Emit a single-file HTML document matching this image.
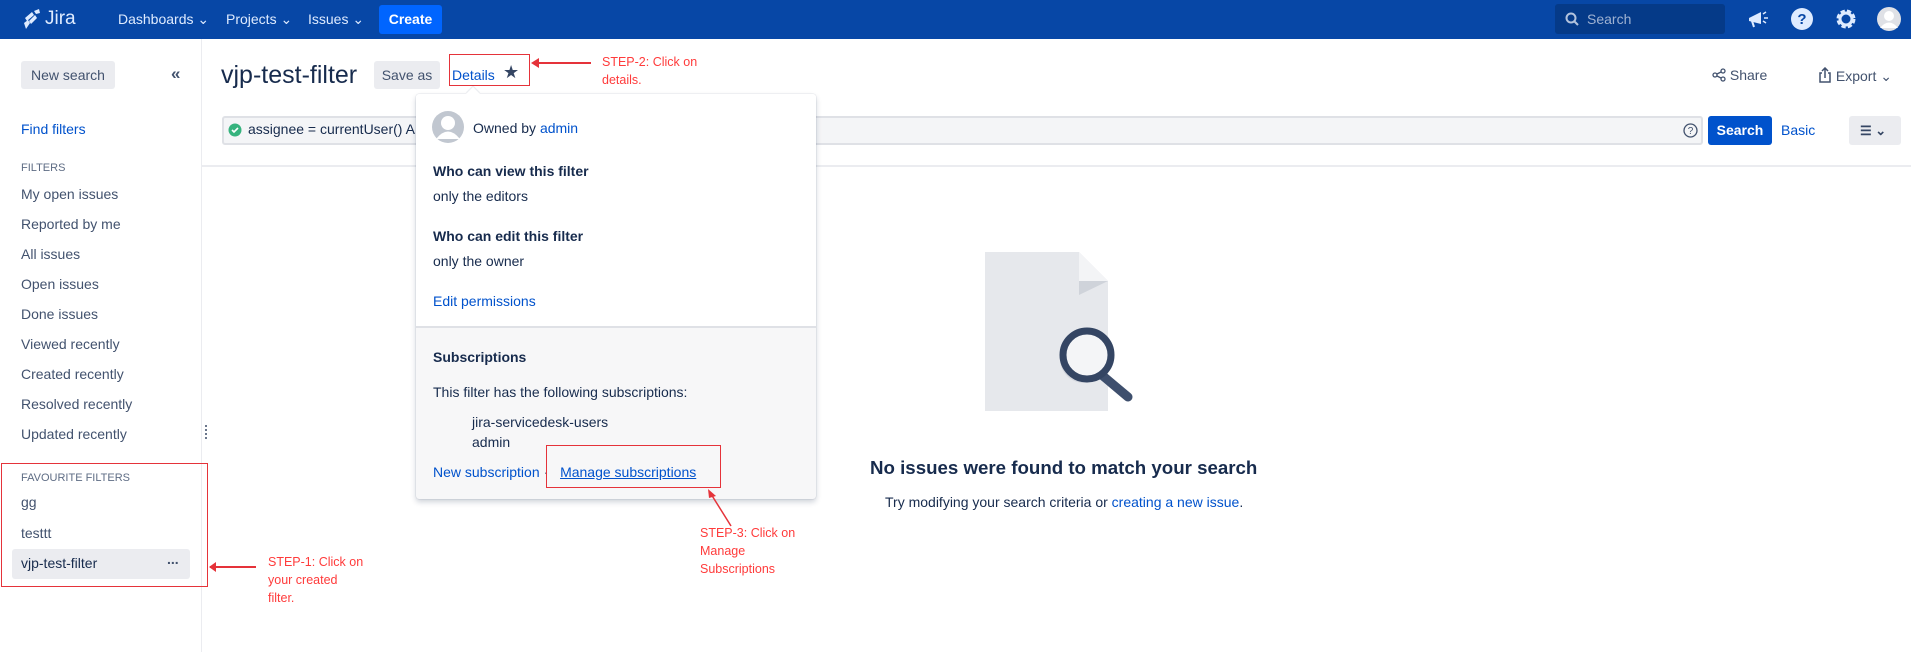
<!DOCTYPE html>
<html><head><meta charset="utf-8"><style>
*{margin:0;padding:0;box-sizing:border-box}
body{width:1911px;height:652px;overflow:hidden;background:#fff;font-family:"Liberation Sans",sans-serif;font-size:14px;color:#172b4d;position:relative}
.a{position:absolute;white-space:nowrap}
.hdr{position:absolute;left:0;top:0;width:1911px;height:39px;background:#0747a6}
.nav{color:#deebff;font-size:14px;top:11px}
.lnk{color:#0052cc}
.red{color:#ff3b3b;font-size:12.5px;line-height:18px}
.rb{position:absolute;border:1.5px solid #e5333a}
.side{top:0;font-size:14px;color:#42526e}
.bold{font-weight:bold;color:#172b4d}
</style></head><body>
<div class="hdr"></div>
<svg class="a" style="left:22px;top:9px" width="20" height="22" viewBox="0 0 20 22"><path d="M3 9 L10 3 L12 6 L5 12Z M7 12 L13 6 L15 9 L9 15Z M2 14 L6 11 L8 14 L4 20Z M12 2 L17 0 L18 4 L14 5Z" fill="#deebff"/></svg>
<div class="a" style="left:45px;top:8px;color:#deebff;font-size:19px">Jira</div>
<div class="a nav" style="left:118px">Dashboards ⌄</div>
<div class="a nav" style="left:226px">Projects ⌄</div>
<div class="a nav" style="left:308px">Issues ⌄</div>
<div class="a" style="left:379px;top:5px;width:63px;height:29px;background:#0065ff;border-radius:3px;color:#fff;font-weight:bold;text-align:center;line-height:29px">Create</div>
<div class="a" style="left:1555px;top:4px;width:170px;height:30px;background:#053a88;border-radius:3px"></div>
<svg class="a" style="left:1565px;top:12px" width="14" height="14"><circle cx="6" cy="6" r="4.5" stroke="#b3c3dd" stroke-width="2" fill="none"/><path d="M9 9l4 4" stroke="#b3c3dd" stroke-width="2"/></svg>
<div class="a" style="left:1587px;top:11px;color:#9fb2d2">Search</div>
<svg class="a" style="left:1747px;top:8px" width="22" height="22"><path d="M2 10 L14 4 L14 16 L2 13Z" fill="#deebff"/><path d="M5 13 L7 19" stroke="#deebff" stroke-width="2"/><path d="M16 6l3-2M17 10h4M16 13l3 2" stroke="#deebff" stroke-width="1.5"/></svg>
<svg class="a" style="left:1790px;top:7px" width="24" height="24"><circle cx="12" cy="12" r="11" fill="#deebff"/><text x="12" y="17" font-size="15" font-weight="bold" text-anchor="middle" fill="#0747a6" font-family="Liberation Sans">?</text></svg>
<svg class="a" style="left:1834px;top:7px" width="24" height="24" viewBox="0 0 24 24"><circle cx="12" cy="12" r="7.5" stroke="#deebff" stroke-width="4" fill="none" stroke-dasharray="4 2"/><circle cx="12" cy="12" r="6" stroke="#deebff" stroke-width="3" fill="none"/></svg>
<svg class="a" style="left:1876px;top:6px" width="26" height="26"><circle cx="13" cy="13" r="12" fill="#dfe1e6"/><circle cx="13" cy="10" r="5" fill="#fff"/><path d="M4 22 Q13 11 22 22" fill="#fff"/></svg>

<!-- sidebar -->
<div class="a" style="left:201px;top:39px;width:1px;height:613px;background:#ebecf0"></div>
<div class="a" style="left:21px;top:61px;width:94px;height:28px;background:#ebecf0;border-radius:3px;color:#42526e;text-align:center;line-height:28px">New search</div>
<div class="a" style="left:171px;top:64px;color:#42526e;font-size:17px;font-weight:bold">«</div>
<div class="a lnk" style="left:21px;top:121px">Find filters</div>
<div class="a" style="left:21px;top:162px;font-size:11px;color:#5e6c84">FILTERS</div>
<div class="a side" style="left:21px;top:186px">My open issues</div>
<div class="a side" style="left:21px;top:216px">Reported by me</div>
<div class="a side" style="left:21px;top:246px">All issues</div>
<div class="a side" style="left:21px;top:276px">Open issues</div>
<div class="a side" style="left:21px;top:306px">Done issues</div>
<div class="a side" style="left:21px;top:336px">Viewed recently</div>
<div class="a side" style="left:21px;top:366px">Created recently</div>
<div class="a side" style="left:21px;top:396px">Resolved recently</div>
<div class="a side" style="left:21px;top:426px">Updated recently</div>
<div class="a" style="left:205px;top:425px;width:2px;height:14px;background:repeating-linear-gradient(#6b778c 0 2px,transparent 2px 4px)"></div>
<div class="a" style="left:21px;top:472px;font-size:11px;color:#5e6c84">FAVOURITE FILTERS</div>
<div class="a side" style="left:21px;top:494px">gg</div>
<div class="a side" style="left:21px;top:525px">testtt</div>
<div class="a" style="left:12px;top:549px;width:178px;height:30px;background:#ebecf0;border-radius:3px"></div>
<div class="a side" style="left:21px;top:555px;color:#172b4d">vjp-test-filter</div>
<div class="a" style="left:167px;top:551px;font-weight:bold;color:#42526e">...</div>
<div class="rb" style="left:1px;top:463px;width:207px;height:124px"></div>
<div class="a" style="left:210px;top:566px;width:46px;height:1.5px;background:#e5333a"></div>
<div class="a" style="left:209px;top:562px;width:0;height:0;border-top:5px solid transparent;border-bottom:5px solid transparent;border-right:7px solid #e5333a"></div>
<div class="a red" style="left:268px;top:553px">STEP-1: Click on<br>your created<br>filter.</div>

<!-- main -->
<div class="a" style="left:221px;top:61px;font-size:25px;color:#172b4d">vjp-test-filter</div>
<div class="a" style="left:374px;top:61px;width:66px;height:28px;background:#ebecf0;border-radius:3px;color:#42526e;text-align:center;line-height:28px">Save as</div>
<div class="a lnk" style="left:452px;top:67px">Details</div>
<div class="a" style="left:503px;top:62px;font-size:18px;color:#344563">★</div>
<div class="rb" style="left:449px;top:54px;width:81px;height:32px"></div>
<div class="a" style="left:538px;top:62px;width:53px;height:1.5px;background:#e5333a"></div>
<div class="a" style="left:531px;top:58px;width:0;height:0;border-top:5px solid transparent;border-bottom:5px solid transparent;border-right:8px solid #e5333a"></div>
<div class="a red" style="left:602px;top:53px">STEP-2: Click on<br>details.</div>
<div class="a" style="left:1712px;top:67px;color:#42526e">
<svg width="14" height="14" style="vertical-align:-2px"><circle cx="3" cy="7" r="2" stroke="#42526e" fill="none" stroke-width="1.3"/><circle cx="11" cy="3" r="2" stroke="#42526e" fill="none" stroke-width="1.3"/><circle cx="11" cy="11" r="2" stroke="#42526e" fill="none" stroke-width="1.3"/><path d="M5 6l4-2M5 8l4 2" stroke="#42526e" stroke-width="1.3"/></svg> Share</div>
<div class="a" style="left:1818px;top:67px;color:#42526e">
<svg width="14" height="16" style="vertical-align:-2px"><path d="M4 6H2v9h10V6h-2" stroke="#42526e" fill="none" stroke-width="1.5"/><path d="M7 11V1M4 4l3-3 3 3" stroke="#42526e" fill="none" stroke-width="1.5"/></svg> Export ⌄</div>
<div class="a" style="left:222px;top:116px;width:1481px;height:29px;background:#f4f5f7;border:2px solid #dfe1e6;border-radius:3px"></div>
<svg class="a" style="left:228px;top:123px" width="14" height="14"><circle cx="7" cy="7" r="6.5" fill="#36b37e"/><path d="M4 7l2 2 4-4" stroke="#fff" stroke-width="1.6" fill="none"/></svg>
<div class="a" style="left:248px;top:121px;color:#172b4d">assignee = currentUser() AND</div>
<svg class="a" style="left:1683px;top:123px" width="15" height="15"><circle cx="7.5" cy="7.5" r="6.5" stroke="#42526e" fill="none" stroke-width="1.3"/><text x="7.5" y="11" font-size="10" text-anchor="middle" fill="#42526e" font-family="Liberation Sans">?</text></svg>
<div class="a" style="left:1708px;top:116px;width:64px;height:29px;background:#0052cc;border-radius:3px;color:#fff;font-weight:bold;text-align:center;line-height:29px">Search</div>
<div class="a lnk" style="left:1781px;top:122px">Basic</div>
<div class="a" style="left:1849px;top:116px;width:52px;height:29px;background:#ebecf0;border-radius:3px;color:#344563;font-weight:bold;line-height:29px;padding-left:11px;font-size:13px">☰ ⌄</div>
<div class="a" style="left:202px;top:165px;width:1709px;height:2px;background:#ebecf0"></div>

<!-- empty state -->
<svg class="a" style="left:985px;top:252px" width="160" height="160" viewBox="0 0 160 160">
<path d="M0 0H94L123 29V159H0Z" fill="#e6e8ec"/>
<path d="M94 0L123 29H94Z" fill="#f3f4f6"/><path d="M94 29H123L94 43Z" fill="#cfd3da"/>
<circle cx="99" cy="107" r="24" fill="#d3d6dd"/>
<path d="M118 124L143 145" stroke="#3e4f6d" stroke-width="9" stroke-linecap="round"/>
<circle cx="102" cy="103" r="24" fill="#f4f5f7" stroke="#344563" stroke-width="7"/>
</svg>
<div class="a" style="left:870px;top:457px;font-size:18.7px;font-weight:bold;color:#172b4d">No issues were found to match your search</div>
<div class="a" style="left:885px;top:494px;color:#172b4d">Try modifying your search criteria or <span class="lnk">creating a new issue</span>.</div>

<!-- popup -->
<div class="a" style="left:416px;top:94px;width:400px;height:405px;background:#f7f7f8;border-radius:3px;box-shadow:0 3px 6px rgba(9,30,66,.2),0 0 1px rgba(9,30,66,.3)"></div>
<div class="a" style="left:416px;top:94px;width:400px;height:234px;background:#fff;border-bottom:2px solid #dfe1e6;border-radius:3px 3px 0 0"></div>
<div class="a" style="left:468px;top:89px;width:10px;height:10px;background:#fff;transform:rotate(45deg);box-shadow:-1px -1px 1px rgba(9,30,66,.1)"></div>
<svg class="a" style="left:432px;top:111px" width="32" height="32"><circle cx="16" cy="16" r="16" fill="#c1c7d0"/><circle cx="16" cy="12" r="7" fill="#fff"/><path d="M4 28 Q16 13 28 28Z" fill="#fff"/></svg>
<div class="a" style="left:473px;top:120px">Owned by <span class="lnk">admin</span></div>
<div class="a bold" style="left:433px;top:163px">Who can view this filter</div>
<div class="a" style="left:433px;top:188px">only the editors</div>
<div class="a bold" style="left:433px;top:228px">Who can edit this filter</div>
<div class="a" style="left:433px;top:253px">only the owner</div>
<div class="a lnk" style="left:433px;top:293px">Edit permissions</div>
<div class="a bold" style="left:433px;top:349px">Subscriptions</div>
<div class="a" style="left:433px;top:384px">This filter has the following subscriptions:</div>
<div class="a" style="left:472px;top:414px">jira-servicedesk-users</div>
<div class="a" style="left:472px;top:434px">admin</div>
<div class="a lnk" style="left:433px;top:464px">New subscription <span style="color:#6b778c">·</span> <span style="text-decoration:underline;margin-left:8px">Manage subscriptions</span></div>
<div class="rb" style="left:546px;top:445px;width:175px;height:43px"></div>
<svg class="a" style="left:705px;top:488px" width="30" height="40"><path d="M26 38L6 6" stroke="#e5333a" stroke-width="1.5"/><path d="M3 1L11 8L4 10Z" fill="#e5333a"/></svg>
<div class="a red" style="left:700px;top:524px">STEP-3: Click on<br>Manage<br>Subscriptions</div>
</body></html>
